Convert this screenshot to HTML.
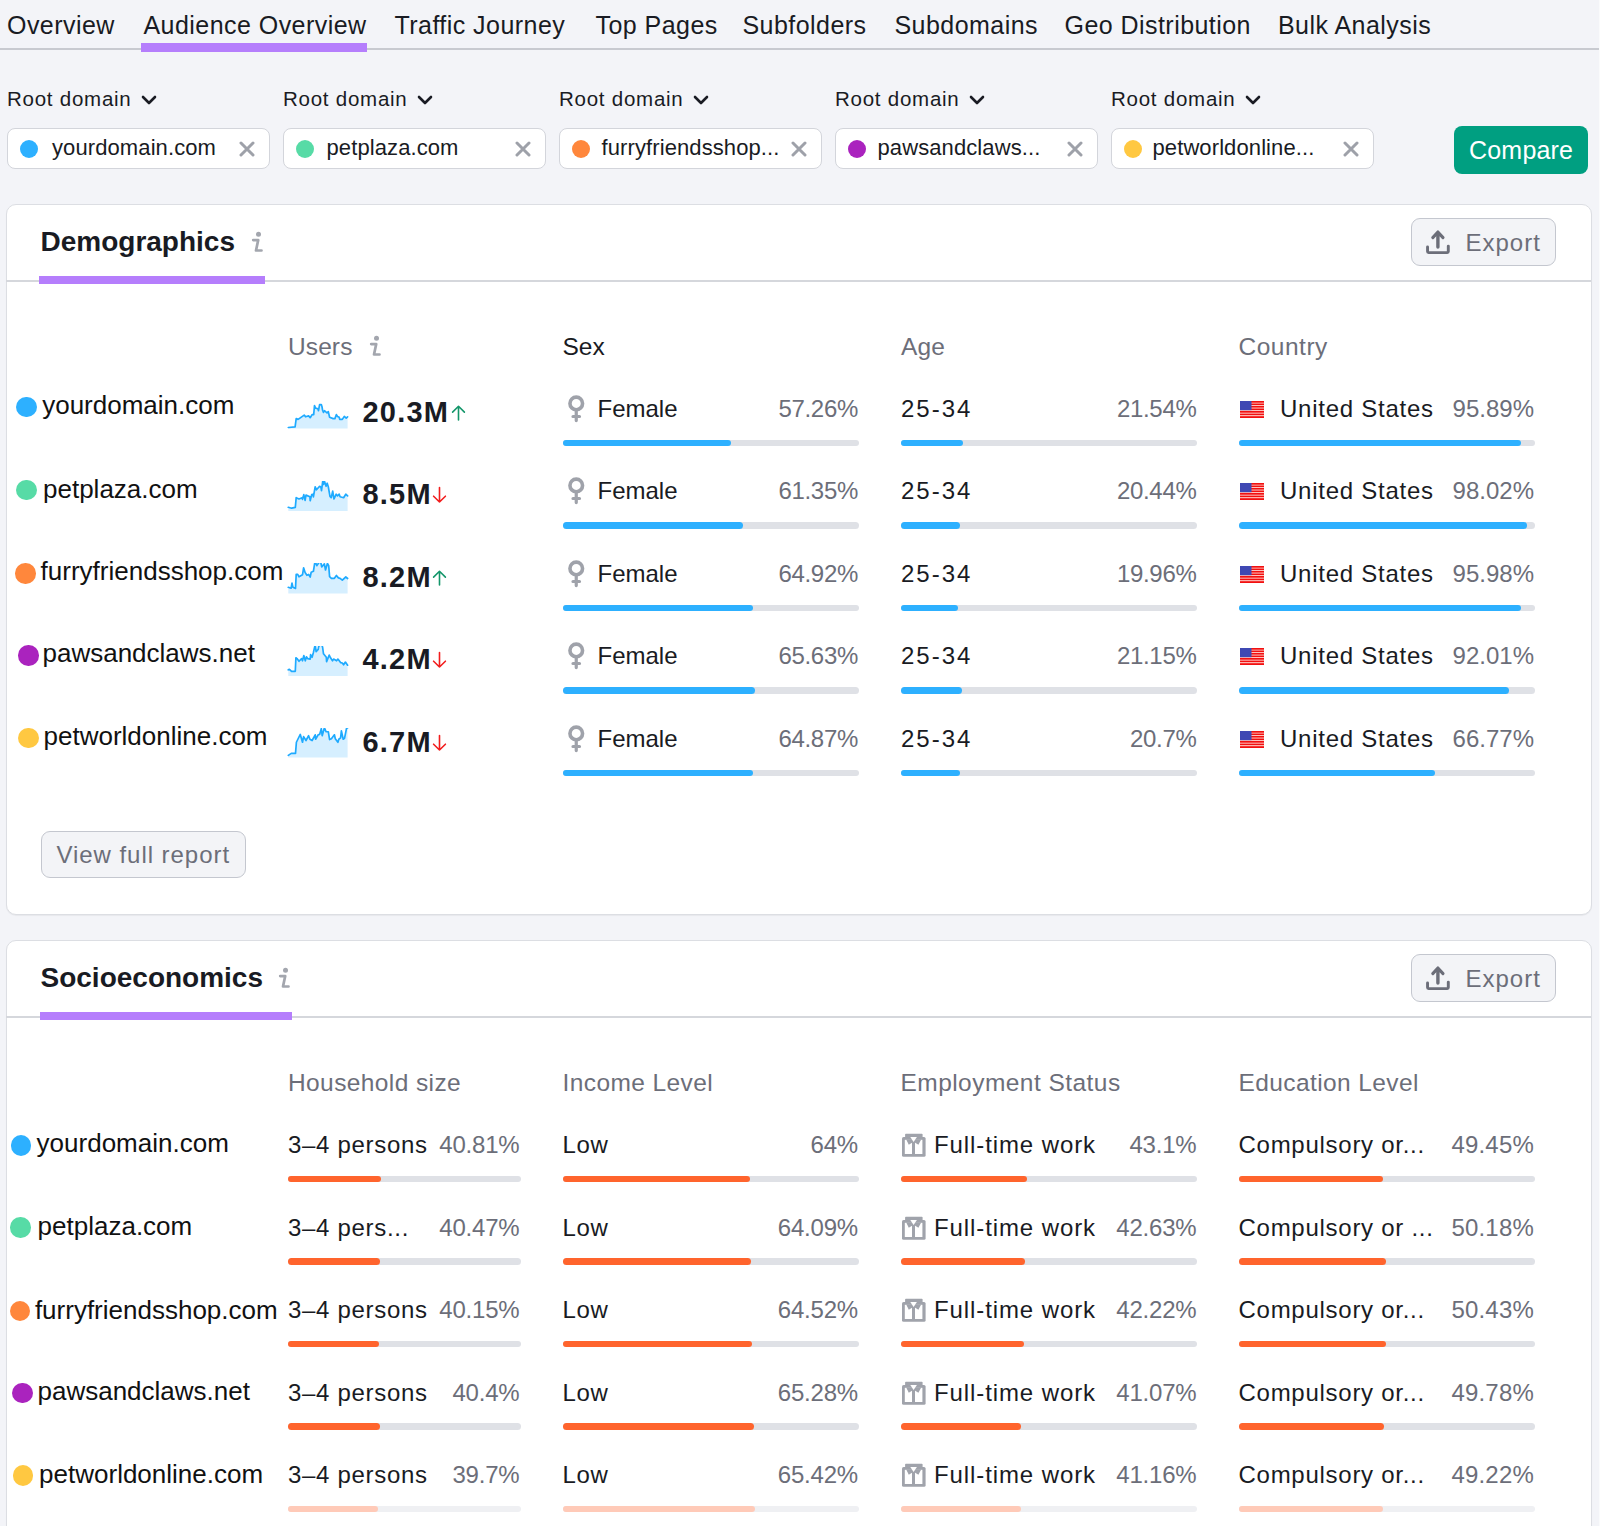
<!DOCTYPE html>
<html><head><meta charset="utf-8"><style>
html,body{margin:0;padding:0;}
body{width:1600px;height:1526px;overflow:hidden;position:relative;background:#f3f4f8;font-family:"Liberation Sans",sans-serif;}
.t{position:absolute;white-space:nowrap;}
.r{position:absolute;}
.chip{background:#fff;border:1.5px solid #d3d5db;border-radius:8px;box-sizing:border-box;}
.card{background:#fff;border:1px solid #dcdee3;border-radius:10px;box-sizing:border-box;box-shadow:0 1px 1px rgba(0,0,0,0.05);}
.btn{background:#f3f4f7;border:1.5px solid #c4c7cf;border-radius:9px;box-sizing:border-box;}
</style></head><body>
<div class="t" style="left:7.0px;top:12.84px;font-size:25px;line-height:25px;color:#191b23;letter-spacing:0.45px;">Overview</div>
<div class="t" style="left:143.5px;top:12.84px;font-size:25px;line-height:25px;color:#191b23;letter-spacing:0.45px;">Audience Overview</div>
<div class="t" style="left:394.5px;top:12.84px;font-size:25px;line-height:25px;color:#191b23;letter-spacing:0.45px;">Traffic Journey</div>
<div class="t" style="left:595.5px;top:12.84px;font-size:25px;line-height:25px;color:#191b23;letter-spacing:0.45px;">Top Pages</div>
<div class="t" style="left:742.5px;top:12.84px;font-size:25px;line-height:25px;color:#191b23;letter-spacing:0.45px;">Subfolders</div>
<div class="t" style="left:894.5px;top:12.84px;font-size:25px;line-height:25px;color:#191b23;letter-spacing:0.45px;">Subdomains</div>
<div class="t" style="left:1064.5px;top:12.84px;font-size:25px;line-height:25px;color:#191b23;letter-spacing:0.45px;">Geo Distribution</div>
<div class="t" style="left:1278.0px;top:12.84px;font-size:25px;line-height:25px;color:#191b23;letter-spacing:0.45px;">Bulk Analysis</div>
<div class="r" style="left:0px;top:48px;width:1600px;height:2px;background:#c8cad0;"></div>
<div class="r" style="left:141px;top:43px;width:226px;height:9px;background:#b57efc;"></div>
<div class="t" style="left:7px;top:89.15px;font-size:20.5px;line-height:20.5px;color:#191b23;letter-spacing:0.75px;">Root domain</div>
<svg class="r" style="left:141px;top:95px" width="16" height="10" viewBox="0 0 16 10"><path d="M2 2 L8 8 L14 2" fill="none" stroke="#191b23" stroke-width="2.6" stroke-linecap="round" stroke-linejoin="round"/></svg>
<div class="r chip" style="left:7px;top:128px;width:263px;height:41px;"></div>
<div class="r" style="left:20px;top:139.5px;width:18px;height:18px;border-radius:50%;background:#2db0ff"></div>
<div class="t" style="left:52px;top:137.38px;font-size:22px;line-height:22px;color:#191b23;letter-spacing:0.1px;">yourdomain.com</div>
<svg class="r" style="left:239px;top:141px" width="16" height="16" viewBox="0 0 16 16"><path d="M2 2 L14 14 M14 2 L2 14" fill="none" stroke="#9ea1a9" stroke-width="3" stroke-linecap="round"/></svg>
<div class="t" style="left:283px;top:89.15px;font-size:20.5px;line-height:20.5px;color:#191b23;letter-spacing:0.75px;">Root domain</div>
<svg class="r" style="left:417px;top:95px" width="16" height="10" viewBox="0 0 16 10"><path d="M2 2 L8 8 L14 2" fill="none" stroke="#191b23" stroke-width="2.6" stroke-linecap="round" stroke-linejoin="round"/></svg>
<div class="r chip" style="left:283px;top:128px;width:263px;height:41px;"></div>
<div class="r" style="left:296px;top:139.5px;width:18px;height:18px;border-radius:50%;background:#57dba6"></div>
<div class="t" style="left:326.5px;top:137.38px;font-size:22px;line-height:22px;color:#191b23;letter-spacing:0.1px;">petplaza.com</div>
<svg class="r" style="left:515px;top:141px" width="16" height="16" viewBox="0 0 16 16"><path d="M2 2 L14 14 M14 2 L2 14" fill="none" stroke="#9ea1a9" stroke-width="3" stroke-linecap="round"/></svg>
<div class="t" style="left:559px;top:89.15px;font-size:20.5px;line-height:20.5px;color:#191b23;letter-spacing:0.75px;">Root domain</div>
<svg class="r" style="left:693px;top:95px" width="16" height="10" viewBox="0 0 16 10"><path d="M2 2 L8 8 L14 2" fill="none" stroke="#191b23" stroke-width="2.6" stroke-linecap="round" stroke-linejoin="round"/></svg>
<div class="r chip" style="left:559px;top:128px;width:263px;height:41px;"></div>
<div class="r" style="left:572px;top:139.5px;width:18px;height:18px;border-radius:50%;background:#ff873c"></div>
<div class="t" style="left:601.5px;top:137.38px;font-size:22px;line-height:22px;color:#191b23;letter-spacing:0.1px;">furryfriendsshop...</div>
<svg class="r" style="left:791px;top:141px" width="16" height="16" viewBox="0 0 16 16"><path d="M2 2 L14 14 M14 2 L2 14" fill="none" stroke="#9ea1a9" stroke-width="3" stroke-linecap="round"/></svg>
<div class="t" style="left:835px;top:89.15px;font-size:20.5px;line-height:20.5px;color:#191b23;letter-spacing:0.75px;">Root domain</div>
<svg class="r" style="left:969px;top:95px" width="16" height="10" viewBox="0 0 16 10"><path d="M2 2 L8 8 L14 2" fill="none" stroke="#191b23" stroke-width="2.6" stroke-linecap="round" stroke-linejoin="round"/></svg>
<div class="r chip" style="left:835px;top:128px;width:263px;height:41px;"></div>
<div class="r" style="left:848px;top:139.5px;width:18px;height:18px;border-radius:50%;background:#aa23be"></div>
<div class="t" style="left:877.5px;top:137.38px;font-size:22px;line-height:22px;color:#191b23;letter-spacing:0.1px;">pawsandclaws...</div>
<svg class="r" style="left:1067px;top:141px" width="16" height="16" viewBox="0 0 16 16"><path d="M2 2 L14 14 M14 2 L2 14" fill="none" stroke="#9ea1a9" stroke-width="3" stroke-linecap="round"/></svg>
<div class="t" style="left:1111px;top:89.15px;font-size:20.5px;line-height:20.5px;color:#191b23;letter-spacing:0.75px;">Root domain</div>
<svg class="r" style="left:1245px;top:95px" width="16" height="10" viewBox="0 0 16 10"><path d="M2 2 L8 8 L14 2" fill="none" stroke="#191b23" stroke-width="2.6" stroke-linecap="round" stroke-linejoin="round"/></svg>
<div class="r chip" style="left:1111px;top:128px;width:263px;height:41px;"></div>
<div class="r" style="left:1124px;top:139.5px;width:18px;height:18px;border-radius:50%;background:#ffc841"></div>
<div class="t" style="left:1152.5px;top:137.38px;font-size:22px;line-height:22px;color:#191b23;letter-spacing:0.1px;">petworldonline...</div>
<svg class="r" style="left:1343px;top:141px" width="16" height="16" viewBox="0 0 16 16"><path d="M2 2 L14 14 M14 2 L2 14" fill="none" stroke="#9ea1a9" stroke-width="3" stroke-linecap="round"/></svg>
<div class="r" style="left:1453.5px;top:126px;width:134.5px;height:48px;border-radius:8px;background:#009f81"></div>
<div class="t" style="left:1469px;top:137.64px;font-size:25px;line-height:25px;color:#ffffff;letter-spacing:0.2px;">Compare</div>
<div class="r card" style="left:5.5px;top:203.5px;width:1586.2px;height:711px;"></div>
<div class="t" style="left:40.5px;top:227.80px;font-size:28px;line-height:28px;color:#191b23;font-weight:700;">Demographics</div>
<svg class="r" style="left:250px;top:229px" width="14" height="24" viewBox="0 0 14 24"><circle cx="8.5" cy="5.2" r="2.5" fill="#a3a6ae"/><path d="M3.2 11.1 L8.2 11.1 L6 21.5 L11.5 21.5" fill="none" stroke="#a3a6ae" stroke-width="2.7" stroke-linecap="round" stroke-linejoin="round"/></svg>
<div class="r" style="left:6px;top:280.0px;width:1585px;height:2px;background:#d5d7dc;"></div>
<div class="r" style="left:39px;top:276.0px;width:226px;height:8px;background:#b57efc;"></div>
<div class="r btn" style="left:1411px;top:218.0px;width:144.5px;height:47.5px;"></div>
<svg class="r" style="left:1425px;top:228.0px" width="27" height="27" viewBox="0 0 27 27"><path d="M12.9 9 L12.9 19" fill="none" stroke="#6c6e79" stroke-width="3.4" stroke-linecap="round"/><path d="M7.8 9.6 L12.9 4 L18 9.6" fill="none" stroke="#6c6e79" stroke-width="3.1" stroke-linecap="round" stroke-linejoin="round"/><path d="M12.9 4.5 L9.5 8.6 L16.3 8.6Z" fill="#6c6e79"/><path d="M2.55 19 L2.55 23.6 Q2.55 24.6 3.55 24.6 L22.3 24.6 Q23.3 24.6 23.3 23.6 L23.3 18.1" fill="none" stroke="#6c6e79" stroke-width="2.9" stroke-linecap="round" stroke-linejoin="round"/></svg>
<div class="t" style="left:1465.5px;top:230.68px;font-size:24px;line-height:24px;color:#6c6e79;letter-spacing:1px;">Export</div>
<div class="t" style="left:288px;top:334.86px;font-size:24.5px;line-height:24.5px;color:#6c6e79;letter-spacing:0.1px;">Users</div>
<svg class="r" style="left:367.5px;top:333.3px" width="14" height="24" viewBox="0 0 14 24"><circle cx="8.5" cy="5.2" r="2.5" fill="#a3a6ae"/><path d="M3.2 11.1 L8.2 11.1 L6 21.5 L11.5 21.5" fill="none" stroke="#a3a6ae" stroke-width="2.7" stroke-linecap="round" stroke-linejoin="round"/></svg>
<div class="t" style="left:562.5px;top:334.56px;font-size:24.5px;line-height:24.5px;color:#191b23;">Sex</div>
<div class="t" style="left:901px;top:334.56px;font-size:24.5px;line-height:24.5px;color:#6c6e79;letter-spacing:0.1px;">Age</div>
<div class="t" style="left:1238.5px;top:334.86px;font-size:24.5px;line-height:24.5px;color:#6c6e79;letter-spacing:0.5px;">Country</div>
<div class="r" style="left:16.3px;top:396.95px;width:20.5px;height:20.5px;border-radius:50%;background:#2db0ff"></div>
<div class="t" style="left:42.2px;top:391.74px;font-size:26px;line-height:26px;color:#111111;">yourdomain.com</div>
<svg class="r" style="left:286px;top:398.0px" width="66" height="34" viewBox="0 0 66 34"><path d="M2.30,30.60 L2.30,29.50 L9.10,28.90 L10.20,20.60 L12.10,21.40 L18.20,17.10 L19.60,18.80 L22.60,17.90 L24.20,19.70 L26.10,16.60 L27.70,16.60 L28.50,7.70 L29.60,10.10 L31.80,10.70 L32.50,12.70 L33.60,6.60 L35.30,6.60 L36.00,8.75 L36.60,12.25 L37.50,14.40 L38.40,12.70 L41.00,14.90 L42.30,13.60 L43.60,19.25 L47.10,20.60 L48.90,20.60 L50.40,16.60 L51.50,18.40 L53.20,19.25 L53.70,21.40 L56.30,21.40 L58.30,18.40 L60.20,20.10 L61.60,18.80 L61.60,30.60 Z" fill="#d6efff"/><polyline points="2.30,29.50 9.10,28.90 10.20,20.60 12.10,21.40 18.20,17.10 19.60,18.80 22.60,17.90 24.20,19.70 26.10,16.60 27.70,16.60 28.50,7.70 29.60,10.10 31.80,10.70 32.50,12.70 33.60,6.60 35.30,6.60 36.00,8.75 36.60,12.25 37.50,14.40 38.40,12.70 41.00,14.90 42.30,13.60 43.60,19.25 47.10,20.60 48.90,20.60 50.40,16.60 51.50,18.40 53.20,19.25 53.70,21.40 56.30,21.40 58.30,18.40 60.20,20.10 61.60,18.80" fill="none" stroke="#1eaaff" stroke-width="1.7" stroke-linejoin="round" stroke-linecap="round"/></svg>
<div class="t" style="left:362.5px;top:397.90px;font-size:29px;line-height:29px;color:#191b23;font-weight:700;letter-spacing:1.2px;">20.3M</div>
<svg class="r" style="left:450.5px;top:403.75px" width="15" height="18" viewBox="0 0 15 18"><path d="M7.5 2.3 L7.5 16 M1.6 8.1 L7.5 2.3 L13.4 8.1" fill="none" stroke="#14966a" stroke-width="1.6" stroke-linecap="round" stroke-linejoin="round"/></svg>
<svg class="r" style="left:567px;top:394.75px" width="19" height="28" viewBox="0 0 19 28"><circle cx="9.25" cy="8.4" r="6.3" fill="none" stroke="#9fa2aa" stroke-width="3.6"/><path d="M9.25 14.5 L9.25 25.6 M6 21.5 L12.5 21.5" fill="none" stroke="#9fa2aa" stroke-width="3.2" stroke-linecap="round"/></svg>
<div class="t" style="left:597.5px;top:396.93px;font-size:24px;line-height:24px;color:#191b23;">Female</div>
<div class="t" style="right:742px;text-align:right;top:396.93px;font-size:24px;line-height:24px;color:#6c6e79;letter-spacing:-0.3px;">57.26%</div>
<div class="r" style="left:563px;top:439.5px;width:296px;height:6.5px;background:#dfe1e6;border-radius:4px;"></div>
<div class="r" style="left:563px;top:439.5px;width:167.5px;height:6.5px;background:#2db0ff;border-radius:4px;"></div>
<div class="t" style="left:901px;top:396.93px;font-size:24px;line-height:24px;color:#191b23;letter-spacing:2px;">25-34</div>
<div class="t" style="right:403.5px;text-align:right;top:396.93px;font-size:24px;line-height:24px;color:#6c6e79;letter-spacing:-0.3px;">21.54%</div>
<div class="r" style="left:901px;top:439.5px;width:296px;height:6.5px;background:#dfe1e6;border-radius:4px;"></div>
<div class="r" style="left:901px;top:439.5px;width:61.8px;height:6.5px;background:#2db0ff;border-radius:4px;"></div>
<svg class="r" style="left:1240px;top:400.75px" width="24" height="17.2" viewBox="0 0 24 17.2"><rect width="24" height="17.2" fill="#ffd9d4"/><g fill="#f21010"><rect y="0" width="24" height="1.7"/><rect y="2.5" width="24" height="1.6"/><rect y="5" width="24" height="1.6"/><rect y="7.5" width="24" height="1.6"/><rect y="10" width="24" height="1.7"/><rect y="12.6" width="24" height="1.6"/><rect y="15.2" width="24" height="2"/></g><rect width="11.5" height="9.2" fill="#3f48b3"/></svg>
<div class="t" style="left:1280px;top:396.93px;font-size:24px;line-height:24px;color:#191b23;letter-spacing:0.75px;">United States</div>
<div class="t" style="right:66px;text-align:right;top:396.93px;font-size:24px;line-height:24px;color:#6c6e79;">95.89%</div>
<div class="r" style="left:1239px;top:439.5px;width:296px;height:6.5px;background:#dfe1e6;border-radius:4px;"></div>
<div class="r" style="left:1239px;top:439.5px;width:281.8px;height:6.5px;background:#2db0ff;border-radius:4px;"></div>
<div class="r" style="left:16.05px;top:479.65px;width:20.5px;height:20.5px;border-radius:50%;background:#57dba6"></div>
<div class="t" style="left:43px;top:476.09px;font-size:26px;line-height:26px;color:#111111;">petplaza.com</div>
<svg class="r" style="left:286px;top:480.5px" width="66" height="34" viewBox="0 0 66 34"><path d="M2.30,30.00 L2.30,26.30 L5.60,27.20 L9.30,26.30 L10.20,16.70 L13.00,18.00 L16.10,16.70 L16.50,18.40 L17.80,13.60 L19.10,19.30 L20.00,14.10 L23.90,15.80 L24.20,19.70 L25.70,13.60 L27.00,13.20 L27.40,15.80 L29.20,5.75 L30.50,8.80 L33.60,5.30 L34.90,6.20 L35.50,9.70 L37.10,-2.60 L37.50,3.50 L38.40,0.10 L40.10,5.30 L41.20,2.25 L42.30,5.75 L44.00,15.40 L45.20,16.70 L46.70,10.10 L48.00,18.00 L50.20,13.20 L51.50,14.90 L53.20,13.20 L54.10,15.80 L57.60,16.70 L59.80,13.20 L61.60,14.90 L61.60,30.00 Z" fill="#d6efff"/><polyline points="2.30,26.30 5.60,27.20 9.30,26.30 10.20,16.70 13.00,18.00 16.10,16.70 16.50,18.40 17.80,13.60 19.10,19.30 20.00,14.10 23.90,15.80 24.20,19.70 25.70,13.60 27.00,13.20 27.40,15.80 29.20,5.75 30.50,8.80 33.60,5.30 34.90,6.20 35.50,9.70 37.10,-2.60 37.50,3.50 38.40,0.10 40.10,5.30 41.20,2.25 42.30,5.75 44.00,15.40 45.20,16.70 46.70,10.10 48.00,18.00 50.20,13.20 51.50,14.90 53.20,13.20 54.10,15.80 57.60,16.70 59.80,13.20 61.60,14.90" fill="none" stroke="#1eaaff" stroke-width="1.7" stroke-linejoin="round" stroke-linecap="round"/></svg>
<div class="t" style="left:362.5px;top:480.40px;font-size:29px;line-height:29px;color:#191b23;font-weight:700;letter-spacing:1.2px;">8.5M</div>
<svg class="r" style="left:432px;top:486.25px" width="15" height="18" viewBox="0 0 15 18"><path d="M7.5 1.5 L7.5 16 M1.6 10.2 L7.5 16 L13.4 10.2" fill="none" stroke="#f21d1d" stroke-width="1.6" stroke-linecap="round" stroke-linejoin="round"/></svg>
<svg class="r" style="left:567px;top:477.25px" width="19" height="28" viewBox="0 0 19 28"><circle cx="9.25" cy="8.4" r="6.3" fill="none" stroke="#9fa2aa" stroke-width="3.6"/><path d="M9.25 14.5 L9.25 25.6 M6 21.5 L12.5 21.5" fill="none" stroke="#9fa2aa" stroke-width="3.2" stroke-linecap="round"/></svg>
<div class="t" style="left:597.5px;top:479.43px;font-size:24px;line-height:24px;color:#191b23;">Female</div>
<div class="t" style="right:742px;text-align:right;top:479.43px;font-size:24px;line-height:24px;color:#6c6e79;letter-spacing:-0.3px;">61.35%</div>
<div class="r" style="left:563px;top:522.0px;width:296px;height:6.5px;background:#dfe1e6;border-radius:4px;"></div>
<div class="r" style="left:563px;top:522.0px;width:179.6px;height:6.5px;background:#2db0ff;border-radius:4px;"></div>
<div class="t" style="left:901px;top:479.43px;font-size:24px;line-height:24px;color:#191b23;letter-spacing:2px;">25-34</div>
<div class="t" style="right:403.5px;text-align:right;top:479.43px;font-size:24px;line-height:24px;color:#6c6e79;letter-spacing:-0.3px;">20.44%</div>
<div class="r" style="left:901px;top:522.0px;width:296px;height:6.5px;background:#dfe1e6;border-radius:4px;"></div>
<div class="r" style="left:901px;top:522.0px;width:58.5px;height:6.5px;background:#2db0ff;border-radius:4px;"></div>
<svg class="r" style="left:1240px;top:483.25px" width="24" height="17.2" viewBox="0 0 24 17.2"><rect width="24" height="17.2" fill="#ffd9d4"/><g fill="#f21010"><rect y="0" width="24" height="1.7"/><rect y="2.5" width="24" height="1.6"/><rect y="5" width="24" height="1.6"/><rect y="7.5" width="24" height="1.6"/><rect y="10" width="24" height="1.7"/><rect y="12.6" width="24" height="1.6"/><rect y="15.2" width="24" height="2"/></g><rect width="11.5" height="9.2" fill="#3f48b3"/></svg>
<div class="t" style="left:1280px;top:479.43px;font-size:24px;line-height:24px;color:#191b23;letter-spacing:0.75px;">United States</div>
<div class="t" style="right:66px;text-align:right;top:479.43px;font-size:24px;line-height:24px;color:#6c6e79;">98.02%</div>
<div class="r" style="left:1239px;top:522.0px;width:296px;height:6.5px;background:#dfe1e6;border-radius:4px;"></div>
<div class="r" style="left:1239px;top:522.0px;width:288.1px;height:6.5px;background:#2db0ff;border-radius:4px;"></div>
<div class="r" style="left:15.25px;top:563.0px;width:20.5px;height:20.5px;border-radius:50%;background:#ff873c"></div>
<div class="t" style="left:40.6px;top:558.49px;font-size:26px;line-height:26px;color:#111111;">furryfriendsshop.com</div>
<svg class="r" style="left:286px;top:563.0px" width="66" height="34" viewBox="0 0 66 34"><path d="M2.30,30.40 L2.30,24.30 L5.10,25.20 L6.00,20.10 L6.90,24.30 L9.50,25.40 L10.20,11.40 L11.70,11.40 L13.00,13.80 L16.50,11.80 L17.60,4.80 L19.10,9.60 L20.90,12.25 L22.60,11.40 L24.20,14.00 L25.20,9.20 L27.40,8.30 L29.00,-1.75 L30.90,2.60 L34.40,-2.60 L35.70,3.90 L38.40,0.90 L39.50,7.00 L41.40,0.40 L42.70,2.60 L43.60,13.60 L45.40,15.30 L48.40,15.30 L50.40,12.50 L52.40,14.90 L54.10,15.30 L56.30,17.10 L59.80,14.00 L61.60,15.50 L61.60,30.40 Z" fill="#d6efff"/><polyline points="2.30,24.30 5.10,25.20 6.00,20.10 6.90,24.30 9.50,25.40 10.20,11.40 11.70,11.40 13.00,13.80 16.50,11.80 17.60,4.80 19.10,9.60 20.90,12.25 22.60,11.40 24.20,14.00 25.20,9.20 27.40,8.30 29.00,-1.75 30.90,2.60 34.40,-2.60 35.70,3.90 38.40,0.90 39.50,7.00 41.40,0.40 42.70,2.60 43.60,13.60 45.40,15.30 48.40,15.30 50.40,12.50 52.40,14.90 54.10,15.30 56.30,17.10 59.80,14.00 61.60,15.50" fill="none" stroke="#1eaaff" stroke-width="1.7" stroke-linejoin="round" stroke-linecap="round"/></svg>
<div class="t" style="left:362.5px;top:562.90px;font-size:29px;line-height:29px;color:#191b23;font-weight:700;letter-spacing:1.2px;">8.2M</div>
<svg class="r" style="left:432px;top:568.75px" width="15" height="18" viewBox="0 0 15 18"><path d="M7.5 2.3 L7.5 16 M1.6 8.1 L7.5 2.3 L13.4 8.1" fill="none" stroke="#14966a" stroke-width="1.6" stroke-linecap="round" stroke-linejoin="round"/></svg>
<svg class="r" style="left:567px;top:559.75px" width="19" height="28" viewBox="0 0 19 28"><circle cx="9.25" cy="8.4" r="6.3" fill="none" stroke="#9fa2aa" stroke-width="3.6"/><path d="M9.25 14.5 L9.25 25.6 M6 21.5 L12.5 21.5" fill="none" stroke="#9fa2aa" stroke-width="3.2" stroke-linecap="round"/></svg>
<div class="t" style="left:597.5px;top:561.93px;font-size:24px;line-height:24px;color:#191b23;">Female</div>
<div class="t" style="right:742px;text-align:right;top:561.93px;font-size:24px;line-height:24px;color:#6c6e79;letter-spacing:-0.3px;">64.92%</div>
<div class="r" style="left:563px;top:604.5px;width:296px;height:6.5px;background:#dfe1e6;border-radius:4px;"></div>
<div class="r" style="left:563px;top:604.5px;width:190.2px;height:6.5px;background:#2db0ff;border-radius:4px;"></div>
<div class="t" style="left:901px;top:561.93px;font-size:24px;line-height:24px;color:#191b23;letter-spacing:2px;">25-34</div>
<div class="t" style="right:403.5px;text-align:right;top:561.93px;font-size:24px;line-height:24px;color:#6c6e79;letter-spacing:-0.3px;">19.96%</div>
<div class="r" style="left:901px;top:604.5px;width:296px;height:6.5px;background:#dfe1e6;border-radius:4px;"></div>
<div class="r" style="left:901px;top:604.5px;width:57.1px;height:6.5px;background:#2db0ff;border-radius:4px;"></div>
<svg class="r" style="left:1240px;top:565.75px" width="24" height="17.2" viewBox="0 0 24 17.2"><rect width="24" height="17.2" fill="#ffd9d4"/><g fill="#f21010"><rect y="0" width="24" height="1.7"/><rect y="2.5" width="24" height="1.6"/><rect y="5" width="24" height="1.6"/><rect y="7.5" width="24" height="1.6"/><rect y="10" width="24" height="1.7"/><rect y="12.6" width="24" height="1.6"/><rect y="15.2" width="24" height="2"/></g><rect width="11.5" height="9.2" fill="#3f48b3"/></svg>
<div class="t" style="left:1280px;top:561.93px;font-size:24px;line-height:24px;color:#191b23;letter-spacing:0.75px;">United States</div>
<div class="t" style="right:66px;text-align:right;top:561.93px;font-size:24px;line-height:24px;color:#6c6e79;">95.98%</div>
<div class="r" style="left:1239px;top:604.5px;width:296px;height:6.5px;background:#dfe1e6;border-radius:4px;"></div>
<div class="r" style="left:1239px;top:604.5px;width:282.1px;height:6.5px;background:#2db0ff;border-radius:4px;"></div>
<div class="r" style="left:18.05px;top:645.45px;width:20.5px;height:20.5px;border-radius:50%;background:#aa23be"></div>
<div class="t" style="left:42.5px;top:640.49px;font-size:26px;line-height:26px;color:#111111;">pawsandclaws.net</div>
<svg class="r" style="left:286px;top:645.5px" width="66" height="34" viewBox="0 0 66 34"><path d="M2.30,30.10 L2.30,23.80 L3.40,23.30 L5.60,25.30 L9.30,25.30 L9.90,11.75 L11.00,12.60 L13.00,15.25 L15.60,12.60 L16.50,14.80 L17.80,9.60 L19.30,14.80 L20.40,10.90 L21.75,12.60 L24.20,13.10 L24.60,8.70 L26.10,11.30 L27.40,6.50 L29.20,-1.40 L30.10,5.60 L32.20,3.40 L32.70,0.40 L35.30,-2.70 L36.60,1.25 L37.50,7.80 L40.30,11.30 L40.60,15.70 L43.20,9.10 L44.50,11.75 L46.50,14.80 L47.60,13.10 L50.60,14.80 L51.90,13.10 L54.60,16.60 L56.30,17.00 L57.60,18.75 L59.40,16.10 L61.60,19.20 L61.60,30.10 Z" fill="#d6efff"/><polyline points="2.30,23.80 3.40,23.30 5.60,25.30 9.30,25.30 9.90,11.75 11.00,12.60 13.00,15.25 15.60,12.60 16.50,14.80 17.80,9.60 19.30,14.80 20.40,10.90 21.75,12.60 24.20,13.10 24.60,8.70 26.10,11.30 27.40,6.50 29.20,-1.40 30.10,5.60 32.20,3.40 32.70,0.40 35.30,-2.70 36.60,1.25 37.50,7.80 40.30,11.30 40.60,15.70 43.20,9.10 44.50,11.75 46.50,14.80 47.60,13.10 50.60,14.80 51.90,13.10 54.60,16.60 56.30,17.00 57.60,18.75 59.40,16.10 61.60,19.20" fill="none" stroke="#1eaaff" stroke-width="1.7" stroke-linejoin="round" stroke-linecap="round"/></svg>
<div class="t" style="left:362.5px;top:645.40px;font-size:29px;line-height:29px;color:#191b23;font-weight:700;letter-spacing:1.2px;">4.2M</div>
<svg class="r" style="left:432px;top:651.25px" width="15" height="18" viewBox="0 0 15 18"><path d="M7.5 1.5 L7.5 16 M1.6 10.2 L7.5 16 L13.4 10.2" fill="none" stroke="#f21d1d" stroke-width="1.6" stroke-linecap="round" stroke-linejoin="round"/></svg>
<svg class="r" style="left:567px;top:642.25px" width="19" height="28" viewBox="0 0 19 28"><circle cx="9.25" cy="8.4" r="6.3" fill="none" stroke="#9fa2aa" stroke-width="3.6"/><path d="M9.25 14.5 L9.25 25.6 M6 21.5 L12.5 21.5" fill="none" stroke="#9fa2aa" stroke-width="3.2" stroke-linecap="round"/></svg>
<div class="t" style="left:597.5px;top:644.43px;font-size:24px;line-height:24px;color:#191b23;">Female</div>
<div class="t" style="right:742px;text-align:right;top:644.43px;font-size:24px;line-height:24px;color:#6c6e79;letter-spacing:-0.3px;">65.63%</div>
<div class="r" style="left:563px;top:687.0px;width:296px;height:6.5px;background:#dfe1e6;border-radius:4px;"></div>
<div class="r" style="left:563px;top:687.0px;width:192.3px;height:6.5px;background:#2db0ff;border-radius:4px;"></div>
<div class="t" style="left:901px;top:644.43px;font-size:24px;line-height:24px;color:#191b23;letter-spacing:2px;">25-34</div>
<div class="t" style="right:403.5px;text-align:right;top:644.43px;font-size:24px;line-height:24px;color:#6c6e79;letter-spacing:-0.3px;">21.15%</div>
<div class="r" style="left:901px;top:687.0px;width:296px;height:6.5px;background:#dfe1e6;border-radius:4px;"></div>
<div class="r" style="left:901px;top:687.0px;width:60.6px;height:6.5px;background:#2db0ff;border-radius:4px;"></div>
<svg class="r" style="left:1240px;top:648.25px" width="24" height="17.2" viewBox="0 0 24 17.2"><rect width="24" height="17.2" fill="#ffd9d4"/><g fill="#f21010"><rect y="0" width="24" height="1.7"/><rect y="2.5" width="24" height="1.6"/><rect y="5" width="24" height="1.6"/><rect y="7.5" width="24" height="1.6"/><rect y="10" width="24" height="1.7"/><rect y="12.6" width="24" height="1.6"/><rect y="15.2" width="24" height="2"/></g><rect width="11.5" height="9.2" fill="#3f48b3"/></svg>
<div class="t" style="left:1280px;top:644.43px;font-size:24px;line-height:24px;color:#191b23;letter-spacing:0.75px;">United States</div>
<div class="t" style="right:66px;text-align:right;top:644.43px;font-size:24px;line-height:24px;color:#6c6e79;">92.01%</div>
<div class="r" style="left:1239px;top:687.0px;width:296px;height:6.5px;background:#dfe1e6;border-radius:4px;"></div>
<div class="r" style="left:1239px;top:687.0px;width:270.3px;height:6.5px;background:#2db0ff;border-radius:4px;"></div>
<div class="r" style="left:18.15px;top:727.75px;width:20.5px;height:20.5px;border-radius:50%;background:#ffc841"></div>
<div class="t" style="left:43.5px;top:722.99px;font-size:26px;line-height:26px;color:#111111;">petworldonline.com</div>
<svg class="r" style="left:286px;top:728.0px" width="66" height="34" viewBox="0 0 66 34"><path d="M2.30,29.60 L2.30,27.40 L5.30,25.40 L9.50,25.40 L10.40,14.25 L12.10,10.75 L14.30,6.40 L16.50,14.25 L17.60,8.60 L20.00,12.50 L22.60,7.70 L23.90,11.20 L26.10,12.50 L29.20,6.80 L29.60,11.20 L32.20,6.80 L33.60,6.40 L35.30,0.70 L36.20,7.70 L38.40,-0.20 L40.10,3.75 L42.30,3.75 L43.60,11.60 L45.40,10.75 L48.40,6.80 L49.30,10.75 L51.90,14.25 L52.80,11.20 L54.60,9.90 L55.40,2.90 L57.20,11.20 L58.50,10.30 L61.10,-2.40 L61.60,-0.20 L61.60,29.60 Z" fill="#d6efff"/><polyline points="2.30,27.40 5.30,25.40 9.50,25.40 10.40,14.25 12.10,10.75 14.30,6.40 16.50,14.25 17.60,8.60 20.00,12.50 22.60,7.70 23.90,11.20 26.10,12.50 29.20,6.80 29.60,11.20 32.20,6.80 33.60,6.40 35.30,0.70 36.20,7.70 38.40,-0.20 40.10,3.75 42.30,3.75 43.60,11.60 45.40,10.75 48.40,6.80 49.30,10.75 51.90,14.25 52.80,11.20 54.60,9.90 55.40,2.90 57.20,11.20 58.50,10.30 61.10,-2.40 61.60,-0.20" fill="none" stroke="#1eaaff" stroke-width="1.7" stroke-linejoin="round" stroke-linecap="round"/></svg>
<div class="t" style="left:362.5px;top:727.90px;font-size:29px;line-height:29px;color:#191b23;font-weight:700;letter-spacing:1.2px;">6.7M</div>
<svg class="r" style="left:432px;top:733.75px" width="15" height="18" viewBox="0 0 15 18"><path d="M7.5 1.5 L7.5 16 M1.6 10.2 L7.5 16 L13.4 10.2" fill="none" stroke="#f21d1d" stroke-width="1.6" stroke-linecap="round" stroke-linejoin="round"/></svg>
<svg class="r" style="left:567px;top:724.75px" width="19" height="28" viewBox="0 0 19 28"><circle cx="9.25" cy="8.4" r="6.3" fill="none" stroke="#9fa2aa" stroke-width="3.6"/><path d="M9.25 14.5 L9.25 25.6 M6 21.5 L12.5 21.5" fill="none" stroke="#9fa2aa" stroke-width="3.2" stroke-linecap="round"/></svg>
<div class="t" style="left:597.5px;top:726.93px;font-size:24px;line-height:24px;color:#191b23;">Female</div>
<div class="t" style="right:742px;text-align:right;top:726.93px;font-size:24px;line-height:24px;color:#6c6e79;letter-spacing:-0.3px;">64.87%</div>
<div class="r" style="left:563px;top:769.5px;width:296px;height:6.5px;background:#dfe1e6;border-radius:4px;"></div>
<div class="r" style="left:563px;top:769.5px;width:190.0px;height:6.5px;background:#2db0ff;border-radius:4px;"></div>
<div class="t" style="left:901px;top:726.93px;font-size:24px;line-height:24px;color:#191b23;letter-spacing:2px;">25-34</div>
<div class="t" style="right:403.5px;text-align:right;top:726.93px;font-size:24px;line-height:24px;color:#6c6e79;letter-spacing:-0.3px;">20.7%</div>
<div class="r" style="left:901px;top:769.5px;width:296px;height:6.5px;background:#dfe1e6;border-radius:4px;"></div>
<div class="r" style="left:901px;top:769.5px;width:59.3px;height:6.5px;background:#2db0ff;border-radius:4px;"></div>
<svg class="r" style="left:1240px;top:730.75px" width="24" height="17.2" viewBox="0 0 24 17.2"><rect width="24" height="17.2" fill="#ffd9d4"/><g fill="#f21010"><rect y="0" width="24" height="1.7"/><rect y="2.5" width="24" height="1.6"/><rect y="5" width="24" height="1.6"/><rect y="7.5" width="24" height="1.6"/><rect y="10" width="24" height="1.7"/><rect y="12.6" width="24" height="1.6"/><rect y="15.2" width="24" height="2"/></g><rect width="11.5" height="9.2" fill="#3f48b3"/></svg>
<div class="t" style="left:1280px;top:726.93px;font-size:24px;line-height:24px;color:#191b23;letter-spacing:0.75px;">United States</div>
<div class="t" style="right:66px;text-align:right;top:726.93px;font-size:24px;line-height:24px;color:#6c6e79;">66.77%</div>
<div class="r" style="left:1239px;top:769.5px;width:296px;height:6.5px;background:#dfe1e6;border-radius:4px;"></div>
<div class="r" style="left:1239px;top:769.5px;width:195.6px;height:6.5px;background:#2db0ff;border-radius:4px;"></div>
<div class="r btn" style="left:41.25px;top:831.25px;width:204.75px;height:46.75px;"></div>
<div class="t" style="left:56.5px;top:843.18px;font-size:24px;line-height:24px;color:#6c6e79;letter-spacing:0.95px;">View full report</div>
<div class="r card" style="left:5.5px;top:939.7px;width:1586.2px;height:700px;"></div>
<div class="t" style="left:40.5px;top:964.00px;font-size:28px;line-height:28px;color:#191b23;font-weight:700;">Socioeconomics</div>
<svg class="r" style="left:276.7px;top:965.3px" width="14" height="24" viewBox="0 0 14 24"><circle cx="8.5" cy="5.2" r="2.5" fill="#a3a6ae"/><path d="M3.2 11.1 L8.2 11.1 L6 21.5 L11.5 21.5" fill="none" stroke="#a3a6ae" stroke-width="2.7" stroke-linecap="round" stroke-linejoin="round"/></svg>
<div class="r" style="left:6px;top:1016.2px;width:1585px;height:2px;background:#d5d7dc;"></div>
<div class="r" style="left:40px;top:1012.2px;width:252px;height:8px;background:#b57efc;"></div>
<div class="r btn" style="left:1411px;top:954.2px;width:144.5px;height:47.5px;"></div>
<svg class="r" style="left:1425px;top:964.2px" width="27" height="27" viewBox="0 0 27 27"><path d="M12.9 9 L12.9 19" fill="none" stroke="#6c6e79" stroke-width="3.4" stroke-linecap="round"/><path d="M7.8 9.6 L12.9 4 L18 9.6" fill="none" stroke="#6c6e79" stroke-width="3.1" stroke-linecap="round" stroke-linejoin="round"/><path d="M12.9 4.5 L9.5 8.6 L16.3 8.6Z" fill="#6c6e79"/><path d="M2.55 19 L2.55 23.6 Q2.55 24.6 3.55 24.6 L22.3 24.6 Q23.3 24.6 23.3 23.6 L23.3 18.1" fill="none" stroke="#6c6e79" stroke-width="2.9" stroke-linecap="round" stroke-linejoin="round"/></svg>
<div class="t" style="left:1465.5px;top:966.88px;font-size:24px;line-height:24px;color:#6c6e79;letter-spacing:1px;">Export</div>
<div class="t" style="left:288px;top:1070.76px;font-size:24.5px;line-height:24.5px;color:#6c6e79;letter-spacing:0.4px;">Household size</div>
<div class="t" style="left:562.5px;top:1070.76px;font-size:24.5px;line-height:24.5px;color:#6c6e79;letter-spacing:0.4px;">Income Level</div>
<div class="t" style="left:900.5px;top:1070.76px;font-size:24.5px;line-height:24.5px;color:#6c6e79;letter-spacing:0.45px;">Employment Status</div>
<div class="t" style="left:1238.5px;top:1070.76px;font-size:24.5px;line-height:24.5px;color:#6c6e79;letter-spacing:0.4px;">Education Level</div>
<div class="r" style="left:10.649999999999999px;top:1135.05px;width:20.5px;height:20.5px;border-radius:50%;background:#2db0ff"></div>
<div class="t" style="left:36.6px;top:1130.24px;font-size:26px;line-height:26px;color:#111111;">yourdomain.com</div>
<div class="t" style="left:288px;top:1133.18px;font-size:24px;line-height:24px;color:#191b23;letter-spacing:0.7px;">3–4 persons</div>
<div class="t" style="right:1080.5px;text-align:right;top:1133.18px;font-size:24px;line-height:24px;color:#6c6e79;letter-spacing:-0.2px;">40.81%</div>
<div class="r" style="left:288px;top:1175.5px;width:233px;height:6.5px;background:#dfe1e6;border-radius:4px;"></div>
<div class="r" style="left:288px;top:1175.5px;width:92.7px;height:6.5px;background:#ff642d;border-radius:4px;"></div>
<div class="t" style="left:562.5px;top:1133.18px;font-size:24px;line-height:24px;color:#191b23;letter-spacing:0.7px;">Low</div>
<div class="t" style="right:742px;text-align:right;top:1133.18px;font-size:24px;line-height:24px;color:#6c6e79;letter-spacing:-0.2px;">64%</div>
<div class="r" style="left:563px;top:1175.5px;width:296px;height:6.5px;background:#dfe1e6;border-radius:4px;"></div>
<div class="r" style="left:563px;top:1175.5px;width:187.4px;height:6.5px;background:#ff642d;border-radius:4px;"></div>
<svg class="r" style="left:898px;top:1130.0px" width="32" height="30" viewBox="898 1130 32 30"><rect x="902" y="1137" width="23.6" height="19.8" rx="1.6" fill="#a0a3ab"/><rect x="905.1" y="1133.8" width="17.5" height="4" rx="0.8" fill="#a0a3ab"/><rect x="904.8" y="1139.8" width="7.2" height="14.2" fill="#fff"/><rect x="915" y="1139.8" width="7.4" height="14.2" fill="#fff"/><path d="M906.2 1139.5 L908.8 1144.8 L912.4 1142.4 L912.4 1139.5Z M921.2 1139.5 L918.4 1144.8 L914.8 1142.4 L914.8 1139.5Z" fill="#a0a3ab"/><path d="M910.3 1137 L916.9 1137 L913.6 1141.9Z" fill="#fff"/></svg>
<div class="t" style="left:934px;top:1133.18px;font-size:24px;line-height:24px;color:#191b23;letter-spacing:0.9px;">Full-time work</div>
<div class="t" style="right:403.5px;text-align:right;top:1133.18px;font-size:24px;line-height:24px;color:#6c6e79;letter-spacing:-0.2px;">43.1%</div>
<div class="r" style="left:901px;top:1175.5px;width:296px;height:6.5px;background:#dfe1e6;border-radius:4px;"></div>
<div class="r" style="left:901px;top:1175.5px;width:125.6px;height:6.5px;background:#ff642d;border-radius:4px;"></div>
<div class="t" style="left:1238.5px;top:1133.18px;font-size:24px;line-height:24px;color:#191b23;letter-spacing:0.73px;">Compulsory or...</div>
<div class="t" style="right:66px;text-align:right;top:1133.18px;font-size:24px;line-height:24px;color:#6c6e79;letter-spacing:0.2px;">49.45%</div>
<div class="r" style="left:1239px;top:1175.5px;width:296px;height:6.5px;background:#dfe1e6;border-radius:4px;"></div>
<div class="r" style="left:1239px;top:1175.5px;width:144.4px;height:6.5px;background:#ff642d;border-radius:4px;"></div>
<div class="r" style="left:10.45px;top:1217.25px;width:20.5px;height:20.5px;border-radius:50%;background:#57dba6"></div>
<div class="t" style="left:37.6px;top:1212.99px;font-size:26px;line-height:26px;color:#111111;">petplaza.com</div>
<div class="t" style="left:288px;top:1215.68px;font-size:24px;line-height:24px;color:#191b23;letter-spacing:0.7px;">3–4 pers...</div>
<div class="t" style="right:1080.5px;text-align:right;top:1215.68px;font-size:24px;line-height:24px;color:#6c6e79;letter-spacing:-0.2px;">40.47%</div>
<div class="r" style="left:288px;top:1258.0px;width:233px;height:6.5px;background:#dfe1e6;border-radius:4px;"></div>
<div class="r" style="left:288px;top:1258.0px;width:91.9px;height:6.5px;background:#ff642d;border-radius:4px;"></div>
<div class="t" style="left:562.5px;top:1215.68px;font-size:24px;line-height:24px;color:#191b23;letter-spacing:0.7px;">Low</div>
<div class="t" style="right:742px;text-align:right;top:1215.68px;font-size:24px;line-height:24px;color:#6c6e79;letter-spacing:-0.2px;">64.09%</div>
<div class="r" style="left:563px;top:1258.0px;width:296px;height:6.5px;background:#dfe1e6;border-radius:4px;"></div>
<div class="r" style="left:563px;top:1258.0px;width:187.7px;height:6.5px;background:#ff642d;border-radius:4px;"></div>
<svg class="r" style="left:898px;top:1212.5px" width="32" height="30" viewBox="898 1130 32 30"><rect x="902" y="1137" width="23.6" height="19.8" rx="1.6" fill="#a0a3ab"/><rect x="905.1" y="1133.8" width="17.5" height="4" rx="0.8" fill="#a0a3ab"/><rect x="904.8" y="1139.8" width="7.2" height="14.2" fill="#fff"/><rect x="915" y="1139.8" width="7.4" height="14.2" fill="#fff"/><path d="M906.2 1139.5 L908.8 1144.8 L912.4 1142.4 L912.4 1139.5Z M921.2 1139.5 L918.4 1144.8 L914.8 1142.4 L914.8 1139.5Z" fill="#a0a3ab"/><path d="M910.3 1137 L916.9 1137 L913.6 1141.9Z" fill="#fff"/></svg>
<div class="t" style="left:934px;top:1215.68px;font-size:24px;line-height:24px;color:#191b23;letter-spacing:0.9px;">Full-time work</div>
<div class="t" style="right:403.5px;text-align:right;top:1215.68px;font-size:24px;line-height:24px;color:#6c6e79;letter-spacing:-0.2px;">42.63%</div>
<div class="r" style="left:901px;top:1258.0px;width:296px;height:6.5px;background:#dfe1e6;border-radius:4px;"></div>
<div class="r" style="left:901px;top:1258.0px;width:124.2px;height:6.5px;background:#ff642d;border-radius:4px;"></div>
<div class="t" style="left:1238.5px;top:1215.68px;font-size:24px;line-height:24px;color:#191b23;letter-spacing:0.73px;">Compulsory or ...</div>
<div class="t" style="right:66px;text-align:right;top:1215.68px;font-size:24px;line-height:24px;color:#6c6e79;letter-spacing:0.2px;">50.18%</div>
<div class="r" style="left:1239px;top:1258.0px;width:296px;height:6.5px;background:#dfe1e6;border-radius:4px;"></div>
<div class="r" style="left:1239px;top:1258.0px;width:146.5px;height:6.5px;background:#ff642d;border-radius:4px;"></div>
<div class="r" style="left:9.5px;top:1300.55px;width:20.5px;height:20.5px;border-radius:50%;background:#ff873c"></div>
<div class="t" style="left:34.9px;top:1296.59px;font-size:26px;line-height:26px;color:#111111;">furryfriendsshop.com</div>
<div class="t" style="left:288px;top:1298.18px;font-size:24px;line-height:24px;color:#191b23;letter-spacing:0.7px;">3–4 persons</div>
<div class="t" style="right:1080.5px;text-align:right;top:1298.18px;font-size:24px;line-height:24px;color:#6c6e79;letter-spacing:-0.2px;">40.15%</div>
<div class="r" style="left:288px;top:1340.5px;width:233px;height:6.5px;background:#dfe1e6;border-radius:4px;"></div>
<div class="r" style="left:288px;top:1340.5px;width:91.1px;height:6.5px;background:#ff642d;border-radius:4px;"></div>
<div class="t" style="left:562.5px;top:1298.18px;font-size:24px;line-height:24px;color:#191b23;letter-spacing:0.7px;">Low</div>
<div class="t" style="right:742px;text-align:right;top:1298.18px;font-size:24px;line-height:24px;color:#6c6e79;letter-spacing:-0.2px;">64.52%</div>
<div class="r" style="left:563px;top:1340.5px;width:296px;height:6.5px;background:#dfe1e6;border-radius:4px;"></div>
<div class="r" style="left:563px;top:1340.5px;width:189.0px;height:6.5px;background:#ff642d;border-radius:4px;"></div>
<svg class="r" style="left:898px;top:1295.0px" width="32" height="30" viewBox="898 1130 32 30"><rect x="902" y="1137" width="23.6" height="19.8" rx="1.6" fill="#a0a3ab"/><rect x="905.1" y="1133.8" width="17.5" height="4" rx="0.8" fill="#a0a3ab"/><rect x="904.8" y="1139.8" width="7.2" height="14.2" fill="#fff"/><rect x="915" y="1139.8" width="7.4" height="14.2" fill="#fff"/><path d="M906.2 1139.5 L908.8 1144.8 L912.4 1142.4 L912.4 1139.5Z M921.2 1139.5 L918.4 1144.8 L914.8 1142.4 L914.8 1139.5Z" fill="#a0a3ab"/><path d="M910.3 1137 L916.9 1137 L913.6 1141.9Z" fill="#fff"/></svg>
<div class="t" style="left:934px;top:1298.18px;font-size:24px;line-height:24px;color:#191b23;letter-spacing:0.9px;">Full-time work</div>
<div class="t" style="right:403.5px;text-align:right;top:1298.18px;font-size:24px;line-height:24px;color:#6c6e79;letter-spacing:-0.2px;">42.22%</div>
<div class="r" style="left:901px;top:1340.5px;width:296px;height:6.5px;background:#dfe1e6;border-radius:4px;"></div>
<div class="r" style="left:901px;top:1340.5px;width:123.0px;height:6.5px;background:#ff642d;border-radius:4px;"></div>
<div class="t" style="left:1238.5px;top:1298.18px;font-size:24px;line-height:24px;color:#191b23;letter-spacing:0.73px;">Compulsory or...</div>
<div class="t" style="right:66px;text-align:right;top:1298.18px;font-size:24px;line-height:24px;color:#6c6e79;letter-spacing:0.2px;">50.43%</div>
<div class="r" style="left:1239px;top:1340.5px;width:296px;height:6.5px;background:#dfe1e6;border-radius:4px;"></div>
<div class="r" style="left:1239px;top:1340.5px;width:147.3px;height:6.5px;background:#ff642d;border-radius:4px;"></div>
<div class="r" style="left:12.350000000000001px;top:1382.75px;width:20.5px;height:20.5px;border-radius:50%;background:#aa23be"></div>
<div class="t" style="left:37.5px;top:1378.49px;font-size:26px;line-height:26px;color:#111111;">pawsandclaws.net</div>
<div class="t" style="left:288px;top:1380.68px;font-size:24px;line-height:24px;color:#191b23;letter-spacing:0.7px;">3–4 persons</div>
<div class="t" style="right:1080.5px;text-align:right;top:1380.68px;font-size:24px;line-height:24px;color:#6c6e79;letter-spacing:-0.2px;">40.4%</div>
<div class="r" style="left:288px;top:1423.0px;width:233px;height:6.5px;background:#dfe1e6;border-radius:4px;"></div>
<div class="r" style="left:288px;top:1423.0px;width:91.7px;height:6.5px;background:#ff642d;border-radius:4px;"></div>
<div class="t" style="left:562.5px;top:1380.68px;font-size:24px;line-height:24px;color:#191b23;letter-spacing:0.7px;">Low</div>
<div class="t" style="right:742px;text-align:right;top:1380.68px;font-size:24px;line-height:24px;color:#6c6e79;letter-spacing:-0.2px;">65.28%</div>
<div class="r" style="left:563px;top:1423.0px;width:296px;height:6.5px;background:#dfe1e6;border-radius:4px;"></div>
<div class="r" style="left:563px;top:1423.0px;width:191.2px;height:6.5px;background:#ff642d;border-radius:4px;"></div>
<svg class="r" style="left:898px;top:1377.5px" width="32" height="30" viewBox="898 1130 32 30"><rect x="902" y="1137" width="23.6" height="19.8" rx="1.6" fill="#a0a3ab"/><rect x="905.1" y="1133.8" width="17.5" height="4" rx="0.8" fill="#a0a3ab"/><rect x="904.8" y="1139.8" width="7.2" height="14.2" fill="#fff"/><rect x="915" y="1139.8" width="7.4" height="14.2" fill="#fff"/><path d="M906.2 1139.5 L908.8 1144.8 L912.4 1142.4 L912.4 1139.5Z M921.2 1139.5 L918.4 1144.8 L914.8 1142.4 L914.8 1139.5Z" fill="#a0a3ab"/><path d="M910.3 1137 L916.9 1137 L913.6 1141.9Z" fill="#fff"/></svg>
<div class="t" style="left:934px;top:1380.68px;font-size:24px;line-height:24px;color:#191b23;letter-spacing:0.9px;">Full-time work</div>
<div class="t" style="right:403.5px;text-align:right;top:1380.68px;font-size:24px;line-height:24px;color:#6c6e79;letter-spacing:-0.2px;">41.07%</div>
<div class="r" style="left:901px;top:1423.0px;width:296px;height:6.5px;background:#dfe1e6;border-radius:4px;"></div>
<div class="r" style="left:901px;top:1423.0px;width:119.6px;height:6.5px;background:#ff642d;border-radius:4px;"></div>
<div class="t" style="left:1238.5px;top:1380.68px;font-size:24px;line-height:24px;color:#191b23;letter-spacing:0.73px;">Compulsory or...</div>
<div class="t" style="right:66px;text-align:right;top:1380.68px;font-size:24px;line-height:24px;color:#6c6e79;letter-spacing:0.2px;">49.78%</div>
<div class="r" style="left:1239px;top:1423.0px;width:296px;height:6.5px;background:#dfe1e6;border-radius:4px;"></div>
<div class="r" style="left:1239px;top:1423.0px;width:145.3px;height:6.5px;background:#ff642d;border-radius:4px;"></div>
<div class="r" style="left:12.5px;top:1465.15px;width:20.5px;height:20.5px;border-radius:50%;background:#ffc841"></div>
<div class="t" style="left:39.1px;top:1460.99px;font-size:26px;line-height:26px;color:#111111;">petworldonline.com</div>
<div class="t" style="left:288px;top:1463.18px;font-size:24px;line-height:24px;color:#191b23;letter-spacing:0.7px;">3–4 persons</div>
<div class="t" style="right:1080.5px;text-align:right;top:1463.18px;font-size:24px;line-height:24px;color:#6c6e79;letter-spacing:-0.2px;">39.7%</div>
<div class="r" style="left:288px;top:1505.5px;width:233px;height:6.5px;background:#eff0f3;border-radius:4px;"></div>
<div class="r" style="left:288px;top:1505.5px;width:90.1px;height:6.5px;background:#ffcab8;border-radius:4px;"></div>
<div class="t" style="left:562.5px;top:1463.18px;font-size:24px;line-height:24px;color:#191b23;letter-spacing:0.7px;">Low</div>
<div class="t" style="right:742px;text-align:right;top:1463.18px;font-size:24px;line-height:24px;color:#6c6e79;letter-spacing:-0.2px;">65.42%</div>
<div class="r" style="left:563px;top:1505.5px;width:296px;height:6.5px;background:#eff0f3;border-radius:4px;"></div>
<div class="r" style="left:563px;top:1505.5px;width:191.6px;height:6.5px;background:#ffcab8;border-radius:4px;"></div>
<svg class="r" style="left:898px;top:1460.0px" width="32" height="30" viewBox="898 1130 32 30"><rect x="902" y="1137" width="23.6" height="19.8" rx="1.6" fill="#a0a3ab"/><rect x="905.1" y="1133.8" width="17.5" height="4" rx="0.8" fill="#a0a3ab"/><rect x="904.8" y="1139.8" width="7.2" height="14.2" fill="#fff"/><rect x="915" y="1139.8" width="7.4" height="14.2" fill="#fff"/><path d="M906.2 1139.5 L908.8 1144.8 L912.4 1142.4 L912.4 1139.5Z M921.2 1139.5 L918.4 1144.8 L914.8 1142.4 L914.8 1139.5Z" fill="#a0a3ab"/><path d="M910.3 1137 L916.9 1137 L913.6 1141.9Z" fill="#fff"/></svg>
<div class="t" style="left:934px;top:1463.18px;font-size:24px;line-height:24px;color:#191b23;letter-spacing:0.9px;">Full-time work</div>
<div class="t" style="right:403.5px;text-align:right;top:1463.18px;font-size:24px;line-height:24px;color:#6c6e79;letter-spacing:-0.2px;">41.16%</div>
<div class="r" style="left:901px;top:1505.5px;width:296px;height:6.5px;background:#eff0f3;border-radius:4px;"></div>
<div class="r" style="left:901px;top:1505.5px;width:119.8px;height:6.5px;background:#ffcab8;border-radius:4px;"></div>
<div class="t" style="left:1238.5px;top:1463.18px;font-size:24px;line-height:24px;color:#191b23;letter-spacing:0.73px;">Compulsory or...</div>
<div class="t" style="right:66px;text-align:right;top:1463.18px;font-size:24px;line-height:24px;color:#6c6e79;letter-spacing:0.2px;">49.22%</div>
<div class="r" style="left:1239px;top:1505.5px;width:296px;height:6.5px;background:#eff0f3;border-radius:4px;"></div>
<div class="r" style="left:1239px;top:1505.5px;width:143.7px;height:6.5px;background:#ffcab8;border-radius:4px;"></div>
<div class="r" style="left:1599px;top:0px;width:1px;height:1526px;background:#fafbfc;"></div>
</body></html>
